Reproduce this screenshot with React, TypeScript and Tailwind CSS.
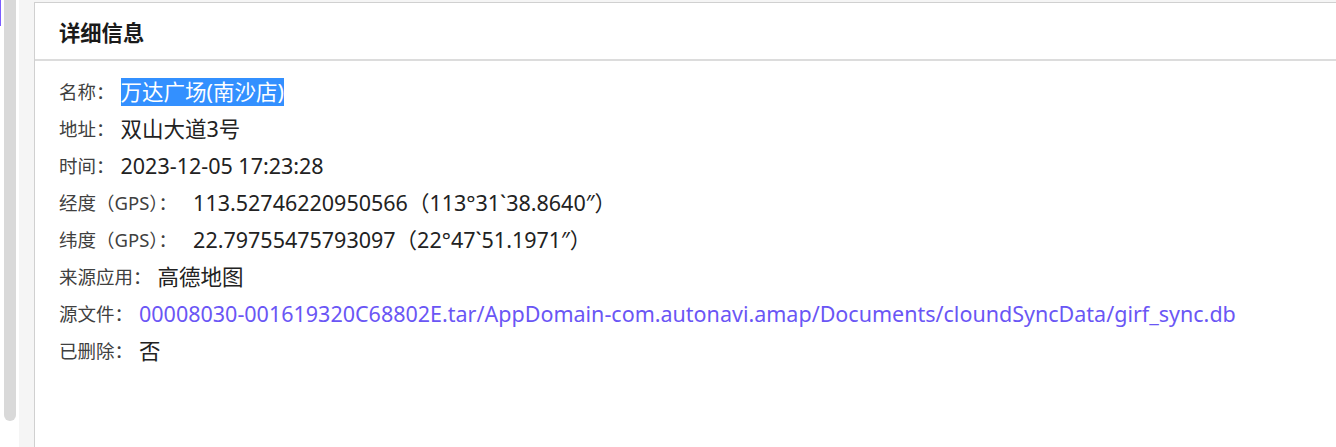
import React from 'react'

const rows = [
  { label: '名称：', value: '万达广场(南沙店)', kind: 'sel' },
  { label: '地址：', value: '双山大道3号' },
  { label: '时间：', value: '2023-12-05 17:23:28' },
  { label: '经度（GPS）：', value: '113.52746220950566（113°31`38.8640″）', wide: true },
  { label: '纬度（GPS）：', value: '22.79755475793097（22°47`51.1971″）', wide: true },
  { label: '来源应用：', value: '高德地图' },
  {
    label: '源文件：',
    value: '00008030-001619320C68802E.tar/AppDomain-com.autonavi.amap/Documents/cloundSyncData/girf_sync.db',
    kind: 'link',
  },
  { label: '已删除：', value: '否' },
]

const App = () => {
  return (
    <div className="flex w-[1336px] h-[447px] overflow-hidden bg-white font-['Noto_Sans','Noto_Sans_CJK_SC',sans-serif]">
      {/* scrollbar strip */}
      <div className="flex w-[19px] shrink-0">
        <div className="w-px h-[26px] bg-[#7b5cff]" />
        <div className="ml-[3px] w-[12px] h-[421px] bg-[#d9d9d9] rounded-b-[6px]" />
      </div>

      <div className="flex flex-1 bg-[#f5f5f5] pl-[15px] pt-[2px]">
        <div className="flex-1 bg-white border-l border-t border-[#d0d0d0]">
          <div className="h-[58px] flex items-center px-[24px] border-b-2 border-[#dcdcdc]">
            <h2 className="mt-[2px] text-[21.3px] font-bold text-[#1a1a1a] font-['Noto_Sans_CJK_SC',sans-serif]">详细信息</h2>
          </div>

          <div className="pt-[12px] px-[24px]">
            {rows.map((r) => (
              <div key={r.label} className="flex items-center h-[37px] whitespace-nowrap">
                <span className="text-[18.5px] text-[#404040] font-['Noto_Sans','Noto_Sans_CJK_SC',sans-serif]">
                  {r.label}
                </span>
                <span
                  className={
                    (r.wide ? 'ml-[16px] ' : 'ml-[6px] ') +
                    'text-[21.5px] leading-[28px] ' +
                    (r.kind === 'sel'
                      ? 'bg-[#3390ff] text-white'
                      : r.kind === 'link'
                        ? 'text-[#6a56f5]'
                        : 'text-[#222]')
                  }
                >
                  {r.value}
                </span>
              </div>
            ))}
          </div>
        </div>
      </div>
    </div>
  )
}

export default App
